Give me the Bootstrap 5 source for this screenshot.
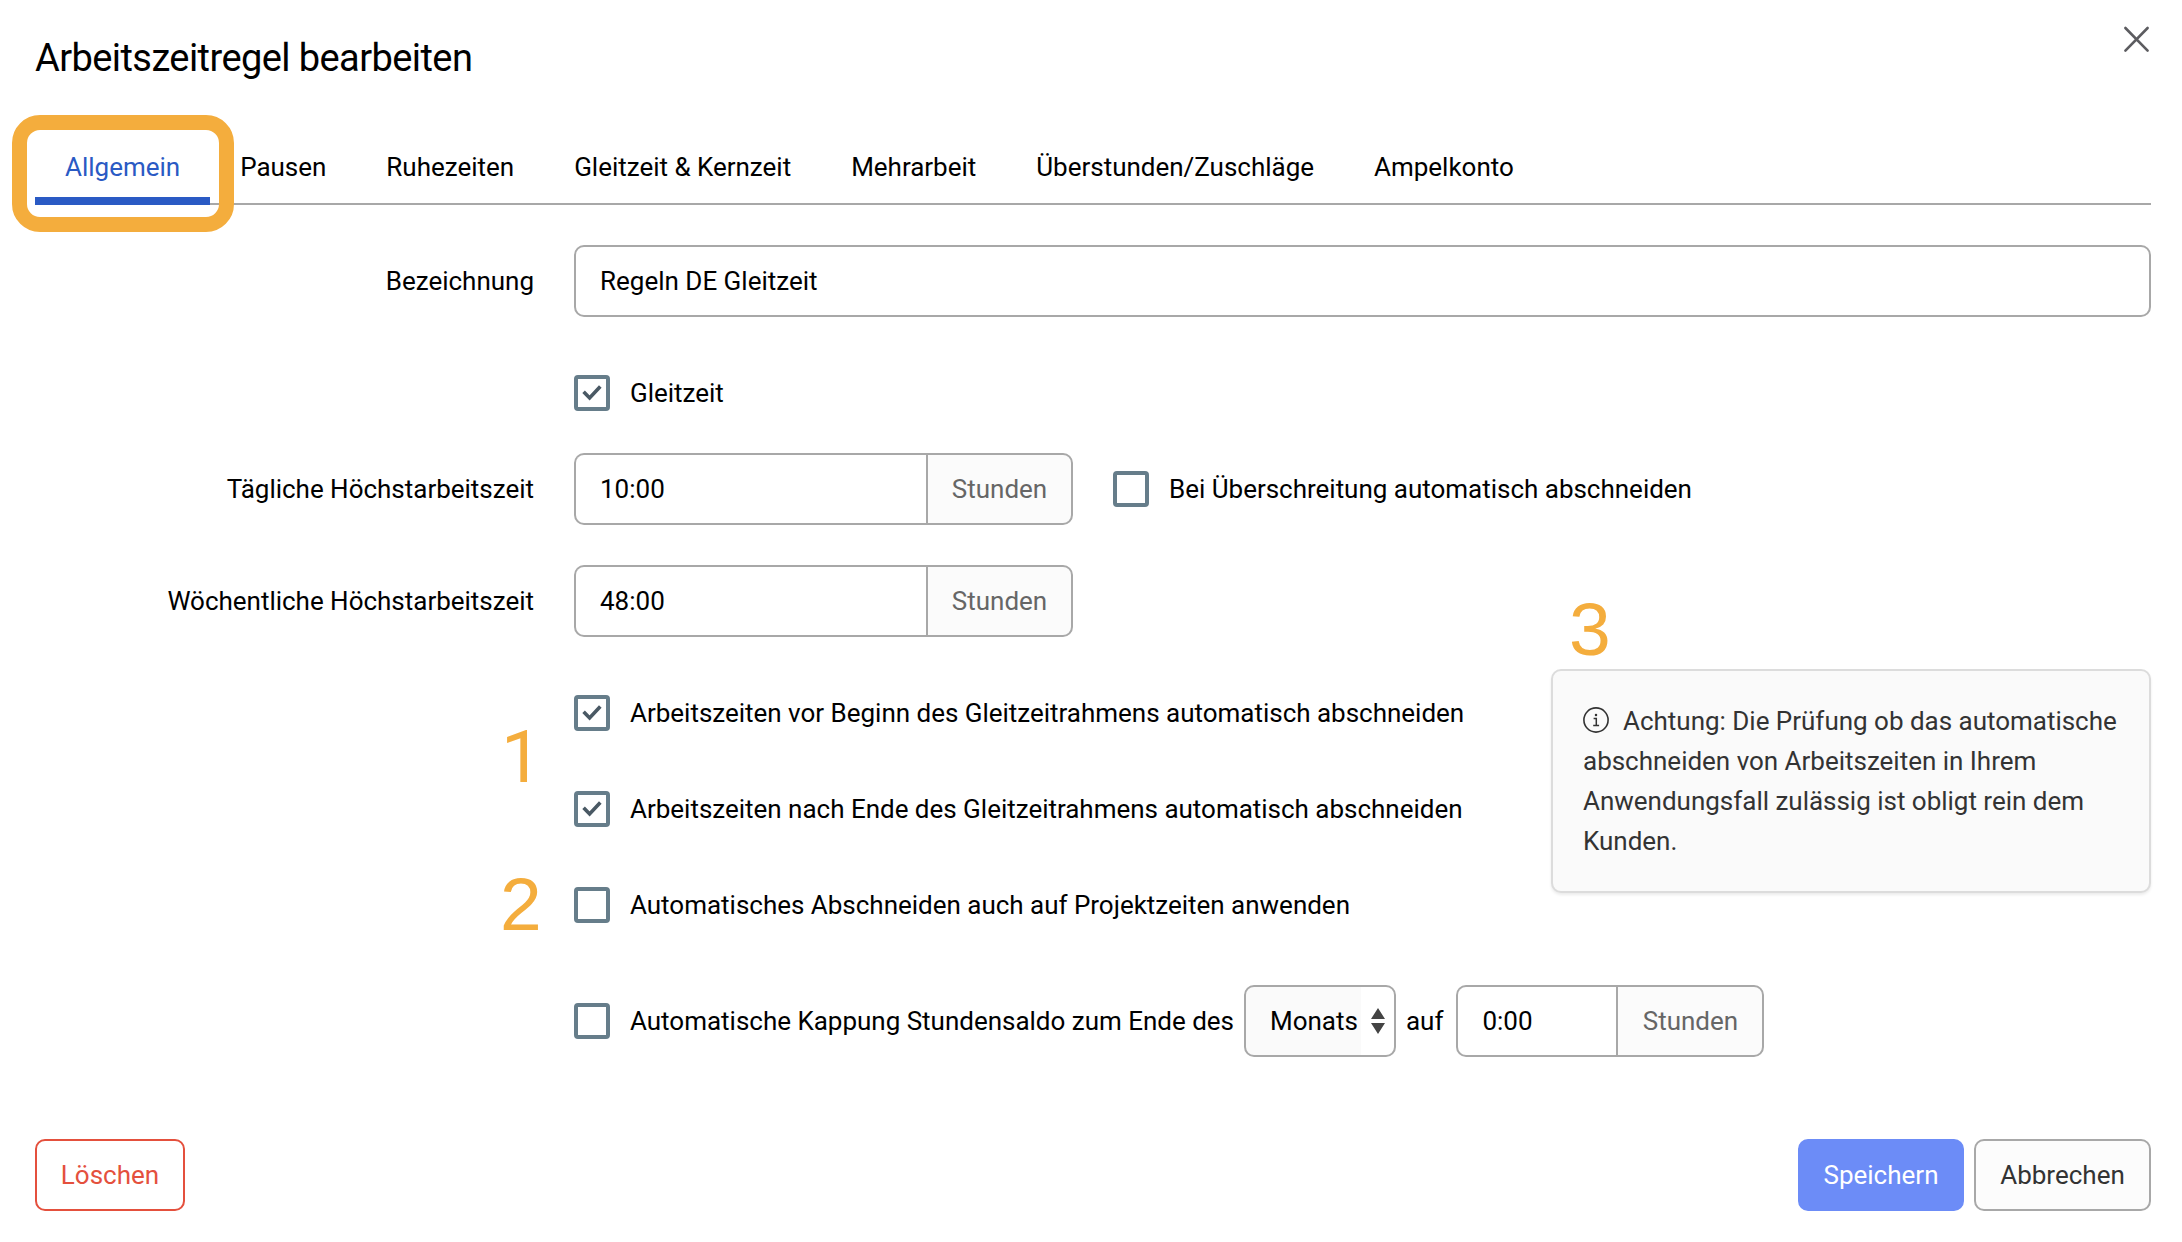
<!DOCTYPE html>
<html lang="de">
<head>
<meta charset="utf-8">
<title>Arbeitszeitregel bearbeiten</title>
<link rel="stylesheet" href="https://cdn.jsdelivr.net/npm/bootstrap@5.3.0/dist/css/bootstrap.min.css">
<style>
  body { font-family: Roboto, "Liberation Sans", sans-serif; font-size: 26px; line-height: 40px; letter-spacing: -.015px; color: #000; background: #fff; }
  .dialog-page { width: 2182px; height: 1242px; padding: 35px 31px 31px 35px; overflow: hidden; }
  .dialog-title { font-size: 38px; line-height: 46px; font-weight: 400; letter-spacing: -.58px; height: 92px; margin: 0; }
  .close-x { margin: -10px 0 0; width: 28px; height: 28px; }
  .rule-tabs { height: 78px; border-bottom: 2px solid #a8a8a8; flex-wrap: nowrap; }
  .rule-tabs .nav-link { height: 78px; padding: 20px 30px 0; border: 0; border-radius: 0; color: #000; background: none; white-space: nowrap; }
  .rule-tabs .nav-link.active { color: #2a5ac4; border-bottom: 8px solid #2a5ac4; background: none; }
  .tab-marker { left: 12px; top: 115px; width: 222px; height: 117px; border: 15px solid #f4ad3d; border-radius: 28px; }
  .form-body { padding-top: 40px; }
  .field-label { width: 499px; margin-right: 40px; text-align: right; flex: none; }
  .form-body .form-control, .form-select, .input-group-text { height: 72px; border: 2px solid #a8a8a8; border-radius: 10px; padding: 0 24px; font-size: 26px; line-height: 40px; color: #000; }
  .input-group .form-control { border-right: 0; }
  .form-body .input-group-text { background: #fbfbfb; color: #666; padding: 0; justify-content: center; margin-left: 0 !important; }
  .hours-group { width: 499px; flex: none; }
  .hours-group .input-group-text { width: 147px; }
  .cap-group { width: 308px; flex: none; margin-left: 3px; }
  .cap-group .input-group-text { width: 148px; }
  .form-check-input { width: 36px; height: 36px; margin: 0; flex: none; border: 4px solid #667d8a; background-size: 28px 28px; }
  .form-check-input[type=checkbox] { border-radius: 4px; }
  .form-check-input:checked[type=checkbox] { background-color: #fff; border-color: #667d8a; background-image: url("data:image/svg+xml,%3csvg xmlns='http://www.w3.org/2000/svg' viewBox='0 0 28 28'%3e%3cpath d='M5.6 12.8l6 6.2L22.3 7.6' fill='none' stroke='%234a5964' stroke-width='3.6'/%3e%3c/svg%3e"); }
  .check-line { gap: 20px; height: 36px; white-space: nowrap; }
  .beside-field { margin-left: 40px; }
  .indent { margin-left: 539px; }
  .flex-time-row { margin-top: 58px; margin-bottom: 42px; }
  .weekly { margin: 40px 0 58px; }
  .check-stack { gap: 60px; }
  .cap-line { margin-top: 62px; height: 72px; gap: 10px; white-space: nowrap; }
  .form-body .month-select { width: 152px; flex: none; padding: 0 0 0 24px; background: url("data:image/svg+xml,%3csvg xmlns='http://www.w3.org/2000/svg' viewBox='0 0 14 26'%3e%3cpath d='M7 0l7 11H0zM7 26l7-11H0z' fill='%23444'/%3e%3c/svg%3e") no-repeat 125px 21px / 14px 26px, linear-gradient(to right, #fafafa 115px, #fff 115px); }
  .note-card { width: 600px; height: 224px; margin-top: -26px; padding: 30px 20px 0 30px; border: 2px solid #dcdcdc; border-radius: 10px; background: #fafafa; color: #333; box-shadow: 0 2px 3px rgba(0,0,0,.08); flex: none; }
  .info-icon { width: 26px; height: 26px; margin-right: 14px; vertical-align: -3px; }
  .step-no { font-family: "Liberation Sans", Arial, sans-serif; font-size: 75px; line-height: 75px; color: #f4ad3d; }
  .no-1 { left: 501px; top: 720px; font-family: Roboto, sans-serif; font-size: 73px; }
  .no-2 { left: 500px; top: 867px; }
  .no-3 { left: 1569px; top: 592px; }
  .dialog-actions { gap: 10px; }
  .dialog-actions .btn { height: 72px; border-width: 2px; border-radius: 10px; padding: 0; font-size: 26px; line-height: 40px; }
  .btn-remove { width: 150px; color: #e4503d; border-color: #e4503d; background: #fff; }
  .btn-save { width: 166px; color: #fff; background: #6c8cf7; border-color: #6c8cf7; }
  .btn-abort { width: 177px; color: #333; background: #fcfcfc; border-color: #a8a8a8; }
</style>
<script src="https://cdn.jsdelivr.net/npm/bootstrap@5.3.0/dist/js/bootstrap.bundle.min.js"></script>
</head>
<body>
<main class="dialog-page position-relative d-flex flex-column">
  <header class="d-flex justify-content-between">
    <h1 class="dialog-title">Arbeitszeitregel bearbeiten</h1>
    <svg class="close-x" viewBox="0 0 28 28" stroke="#5c5c60" stroke-width="2.6" stroke-linecap="round"><path d="M2.4 3L24.6 25.6M24.6 3L2.4 25.6"/></svg>
  </header>
  <nav class="nav nav-tabs rule-tabs">
    <a class="nav-link active">Allgemein</a>
    <a class="nav-link">Pausen</a>
    <a class="nav-link">Ruhezeiten</a>
    <a class="nav-link">Gleitzeit &amp; Kernzeit</a>
    <a class="nav-link">Mehrarbeit</a>
    <a class="nav-link">Überstunden/Zuschläge</a>
    <a class="nav-link">Ampelkonto</a>
  </nav>

  <form class="form-body d-flex flex-column">
    <div class="d-flex align-items-center">
      <label class="field-label">Bezeichnung</label>
      <input class="form-control" type="text" value="Regeln DE Gleitzeit">
    </div>
    <div class="indent flex-time-row">
      <label class="check-line d-flex align-items-center"><input class="form-check-input" type="checkbox" checked>Gleitzeit</label>
    </div>
    <div class="d-flex align-items-center">
      <label class="field-label">Tägliche Höchstarbeitszeit</label>
      <div class="input-group hours-group">
        <input class="form-control" type="text" value="10:00">
        <span class="input-group-text">Stunden</span>
      </div>
      <label class="check-line beside-field d-flex align-items-center"><input class="form-check-input" type="checkbox">Bei Überschreitung automatisch abschneiden</label>
    </div>
    <div class="weekly d-flex align-items-center">
      <label class="field-label">Wöchentliche Höchstarbeitszeit</label>
      <div class="input-group hours-group">
        <input class="form-control" type="text" value="48:00">
        <span class="input-group-text">Stunden</span>
      </div>
    </div>
    <div class="indent d-flex justify-content-between align-items-start">
      <div class="check-stack d-flex flex-column">
        <label class="check-line d-flex align-items-center"><input class="form-check-input" type="checkbox" checked>Arbeitszeiten vor Beginn des Gleitzeitrahmens automatisch abschneiden</label>
        <label class="check-line d-flex align-items-center"><input class="form-check-input" type="checkbox" checked>Arbeitszeiten nach Ende des Gleitzeitrahmens automatisch abschneiden</label>
        <label class="check-line d-flex align-items-center"><input class="form-check-input" type="checkbox">Automatisches Abschneiden auch auf Projektzeiten anwenden</label>
      </div>
      <div class="note-card" role="note"><svg class="info-icon" viewBox="0 0 26 26"><circle cx="13" cy="13" r="12.1" fill="none" stroke="#333" stroke-width="1.6"/><circle cx="13" cy="7.9" r="1.25" fill="#333"/><path d="M10.6 11.6h2.7v6.8M10.2 18.6h5.9" fill="none" stroke="#333" stroke-width="1.5"/></svg>Achtung: Die Prüfung ob das automatische abschneiden von Arbeitszeiten in Ihrem Anwendungsfall zulässig ist obligt rein dem Kunden.</div>
    </div>
    <div class="cap-line indent d-flex align-items-center">
      <label class="check-line d-flex align-items-center"><input class="form-check-input" type="checkbox">Automatische Kappung Stundensaldo zum Ende des</label>
      <select class="form-select month-select"><option>Monats</option></select>
      <span>auf</span>
      <div class="input-group cap-group">
        <input class="form-control" type="text" value="0:00">
        <span class="input-group-text">Stunden</span>
      </div>
    </div>
  </form>

  <footer class="dialog-actions d-flex mt-auto">
    <button class="btn btn-remove me-auto" type="button">Löschen</button>
    <button class="btn btn-save" type="button">Speichern</button>
    <button class="btn btn-abort" type="button">Abbrechen</button>
  </footer>

  <div class="tab-marker position-absolute"></div>
  <span class="step-no no-1 position-absolute">1</span>
  <span class="step-no no-2 position-absolute">2</span>
  <span class="step-no no-3 position-absolute">3</span>
</main>
</body>
</html>
